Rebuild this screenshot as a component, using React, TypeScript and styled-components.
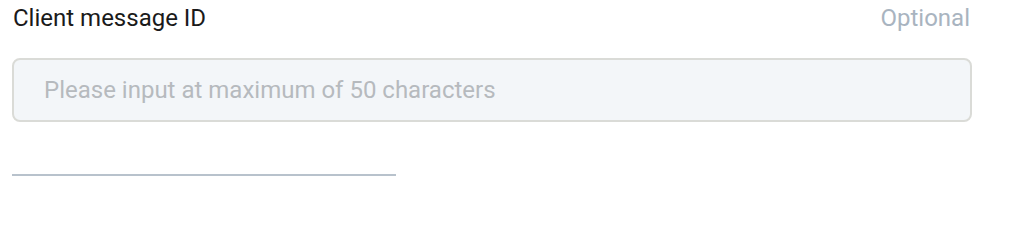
import React from "react";
import styled, { createGlobalStyle } from "styled-components";

const GlobalStyle = createGlobalStyle`
  html, body {
    margin: 0;
    padding: 0;
    background: #ffffff;
  }
  body {
    font-family: Roboto, "Liberation Sans", Arial, sans-serif;
  }
`;

const Page = styled.div`
  padding: 0 37px 0 12px;
  width: 960px;
`;

const Field = styled.div`
  display: flex;
  flex-direction: column;
`;

const LabelRow = styled.div`
  display: flex;
  justify-content: space-between;
  align-items: baseline;
  height: 36px;
  line-height: 36px;
  font-size: 24px;
`;

const Label = styled.label`
  color: #1a1a1a;
  padding-left: 1px;
`;

const Hint = styled.span`
  color: #a9b4c0;
  padding-right: 2px;
`;

const Input = styled.input`
  box-sizing: border-box;
  margin-top: 22px;
  width: 960px;
  height: 64px;
  padding: 0 30px;
  border: 2px solid #dadbd7;
  border-radius: 8px;
  background: #f3f6f9;
  font-family: Roboto, "Liberation Sans", Arial, sans-serif;
  font-size: 24px;
  color: #1a1a1a;
  outline: none;
  &::placeholder {
    color: #b6babe;
  }
`;

const Divider = styled.div`
  margin-top: 52px;
  width: 384px;
  height: 2px;
  background: #b8c2cc;
`;

export default function App() {
  return (
    <>
      <GlobalStyle />
      <Page>
        <Field>
          <LabelRow>
            <Label htmlFor="cmid">Client message ID</Label>
            <Hint>Optional</Hint>
          </LabelRow>
          <Input id="cmid" placeholder="Please input at maximum of 50 characters" />
        </Field>
        <Divider />
      </Page>
    </>
  );
}
